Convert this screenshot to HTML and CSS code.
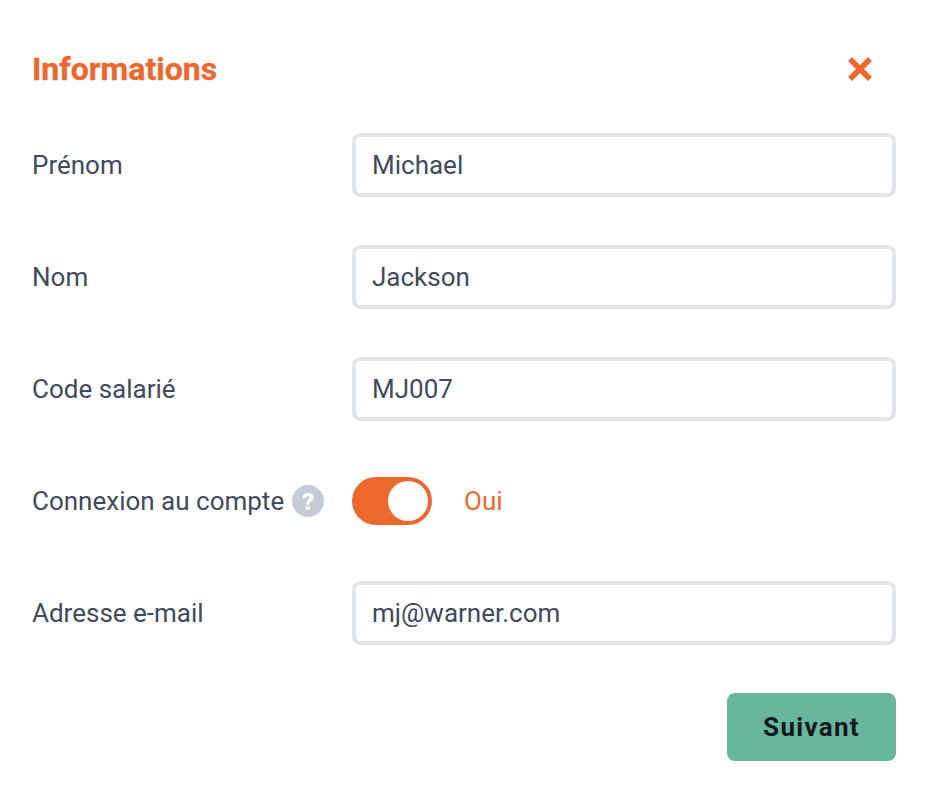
FILE: index.html
```html
<!DOCTYPE html>
<html lang="fr">
<head>
<meta charset="utf-8">
<title>Informations</title>
<link rel="stylesheet" href="styles.css">
</head>
<body>
<form class="panel">
  <header class="head">
    <h1 class="title">Informations</h1>
    <button type="button" class="close" aria-label="Fermer">
      <svg viewBox="0 0 24 24" width="24" height="24"><path d="M4 4L20 20M20 4L4 20" fill="none" stroke="#ee672c" stroke-width="5.6" stroke-linecap="square"/></svg>
    </button>
  </header>
  <div class="row">
    <label class="label">Prénom</label>
    <input class="field" value="Michael">
  </div>
  <div class="row">
    <label class="label">Nom</label>
    <input class="field" value="Jackson">
  </div>
  <div class="row">
    <label class="label">Code salarié</label>
    <input class="field" value="MJ007">
  </div>
  <div class="row toggle-row">
    <label class="label">Connexion au compte
      <svg class="help" viewBox="0 0 32 32" width="32" height="32"><circle cx="16" cy="16" r="16" fill="#c5ccd6"/><text x="16" y="24.5" class="help-mark">?</text></svg>
    </label>
    <div class="toggle"><span class="knob"></span></div>
    <span class="state">Oui</span>
  </div>
  <div class="row">
    <label class="label">Adresse e-mail</label>
    <input class="field" value="mj@warner.com">
  </div>
  <div class="actions">
    <button type="button" class="next">Suivant</button>
  </div>
</form>
</body>
</html>
```
FILE: styles.css
```css
* { box-sizing: border-box; }
html, body { margin: 0; background: #fff; }
body { font-family: Roboto, "Liberation Sans", sans-serif; color: #404b5c; }
.panel { width: 932px; height: 792px; padding: 45px 36px 0 32px; display: flex; flex-direction: column; }
.head { display: flex; justify-content: space-between; align-items: center; height: 48px; margin-bottom: 40px; }
.title { margin: 0; font-size: 32px; line-height: 48px; font-weight: 700; color: #ee672c; -webkit-text-stroke: 0.3px #ee672c; }
.close { border: 0; background: none; padding: 0; margin-right: 24px; width: 24px; height: 24px; display: flex; }
.row { display: flex; align-items: center; height: 64px; margin-bottom: 48px; }
.label { width: 320px; flex: none; font-size: 26px; display: flex; align-items: center; gap: 8px; white-space: nowrap; }
.field { flex: 1; min-width: 0; height: 64px; border: 4px solid #e2e5ea; border-radius: 8px; padding: 0 16px; font: 400 26px Roboto, sans-serif; color: #404b5c; background: #fff; outline: 0; }
.help { flex: none; }
.help-mark { font: 900 24px Roboto, sans-serif; fill: #fff; text-anchor: middle; }
.toggle { width: 80px; height: 48px; border-radius: 24px; background: #ee672c; flex: none; display: flex; align-items: center; justify-content: flex-end; padding: 4px; }
.knob { width: 40px; height: 40px; border-radius: 50%; background: #fff; }
.state { margin-left: 32px; font-size: 26px; color: #ee672c; }
.actions { display: flex; justify-content: flex-end; }
.next { width: 169px; height: 68px; border: 0; border-radius: 8px; background: #67b79d; color: #14191f; font: 700 26px Roboto, sans-serif; letter-spacing: 1.3px; }
```
